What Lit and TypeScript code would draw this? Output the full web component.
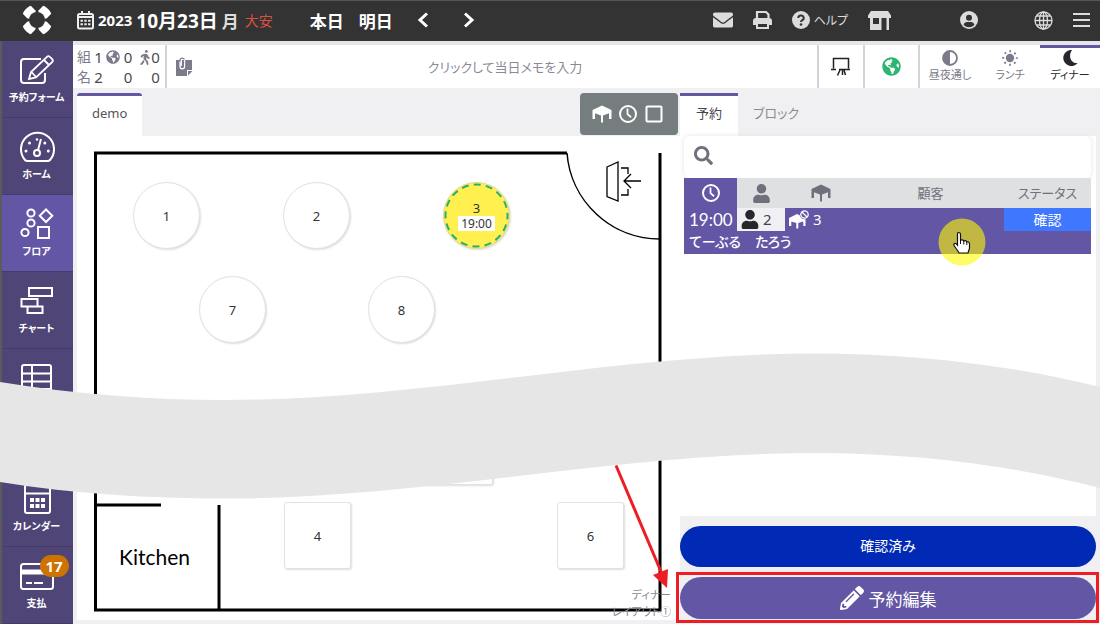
import { LitElement, html, svg, css } from "lit";
import { customElement, state } from "lit/decorators.js";

const P = {
  envelope:
    "M502.3 190.8c3.9-3.1 9.7-.2 9.7 4.7V400c0 26.5-21.5 48-48 48H48c-26.5 0-48-21.5-48-48V195.6c0-5 5.7-7.8 9.7-4.7 22.4 17.4 52.1 39.5 154.1 113.6 21.1 15.4 56.7 47.8 92.2 47.6 35.7.3 72-32.8 92.3-47.6 102-74.1 131.6-96.3 154-113.7zM256 320c23.2.4 56.6-29.2 73.4-41.4 132.7-96.3 142.8-104.7 173.4-128.7 5.8-4.5 9.2-11.5 9.2-18.9v-19c0-26.5-21.5-48-48-48H48c-26.5 0-48 21.5-48 48v19c0 7.4 3.4 14.3 9.2 18.9 30.6 23.9 40.7 32.4 173.4 128.7 16.8 12.2 50.2 41.8 73.4 41.4z",
  user:
    "M224 256c70.7 0 128-57.3 128-128S294.7 0 224 0 96 57.3 96 128s57.3 128 128 128zm89.6 32h-16.7c-22.2 10.2-46.9 16-72.9 16s-50.6-5.8-72.9-16h-16.7C60.2 288 0 348.2 0 422.4V464c0 26.5 21.5 48 48 48h352c26.5 0 48-21.5 48-48v-41.6c0-74.2-60.2-134.4-134.4-134.4z",
  search:
    "M505 442.7L405.3 343c-4.5-4.5-10.6-7-17-7H372c27.6-35.3 44-79.7 44-128C416 93.1 322.9 0 208 0S0 93.1 0 208s93.1 208 208 208c48.3 0 92.7-16.4 128-44v16.3c0 6.4 2.5 12.5 7 17l99.7 99.7c9.4 9.4 24.6 9.4 33.9 0l28.3-28.3c9.4-9.4 9.4-24.6.1-34zM208 336c-70.7 0-128-57.2-128-128 0-70.7 57.2-128 128-128 70.7 0 128 57.2 128 128 0 70.7-57.2 128-128 128z",
  globe:
    "M248 8C111.03 8 0 119.03 0 256s111.03 248 248 248 248-111.03 248-248S384.97 8 248 8zm82.29 357.6c-3.9 3.88-7.99 7.95-11.31 11.28-2.99 3-5.1 6.7-6.17 10.71-1.51 5.66-2.73 11.38-4.77 16.87l-17.39 46.85c-13.76 3-28 4.69-42.65 4.69v-27.38c1.69-12.62-7.64-36.26-22.63-51.25-6-6-9.37-14.14-9.37-22.63v-32.01c0-11.64-6.27-22.34-16.46-27.97-14.37-7.95-34.81-19.06-48.81-26.11-11.48-5.78-22.1-13.14-31.65-21.75l-.8-.72a114.792 114.792 0 0 1-18.06-20.74c-9.38-13.77-24.66-36.42-34.59-51.14 20.47-45.5 57.36-82.04 103.2-101.89l24.01 12.01C203.48 89.74 216 82.01 216 70.11v-11.3c7.99-1.29 16.12-2.11 24.39-2.42l28.3 28.3c6.25 6.25 6.25 16.38 0 22.63L264 112l-10.34 10.34c-3.12 3.12-3.12 8.19 0 11.31l4.69 4.69c3.12 3.12 3.12 8.19 0 11.31l-8 8a8.008 8.008 0 0 1-5.66 2.34h-8.99c-2.08 0-4.08.81-5.58 2.27l-9.92 9.65a8.008 8.008 0 0 0-1.58 9.31l15.59 31.19c2.66 5.32-1.21 11.58-7.15 11.58h-5.64c-1.93 0-3.79-.7-5.24-1.96l-9.28-8.06a16.017 16.017 0 0 0-15.55-3.1l-31.17 10.39a11.95 11.95 0 0 0-8.17 11.34c0 4.53 2.56 8.66 6.61 10.69l11.08 5.54c9.41 4.71 19.79 7.16 30.31 7.16s22.59 27.29 32 32h66.75c8.49 0 16.62 3.37 22.63 9.37l13.69 13.69a30.503 30.503 0 0 1 8.93 21.57 46.536 46.536 0 0 1-13.72 32.98zM417 274.25c-5.79-1.45-10.84-5-14.15-9.97l-17.98-26.97a23.97 23.97 0 0 1 0-26.62l19.59-29.38c2.32-3.47 5.5-6.29 9.24-8.15l12.98-6.49C440.2 193.59 448 223.87 448 256c0 8.67-.74 17.16-1.82 25.54L417 274.25z",
  walk:
    "M208 96c26.5 0 48-21.5 48-48S234.5 0 208 0s-48 21.5-48 48 21.5 48 48 48zm94.5 149.1l-23.3-11.8-9.7-29.4c-14.7-44.6-55.7-75.8-102.2-75.9-36-.1-55.9 10.1-93.3 25.2-21.6 8.7-39.3 25.2-49.7 46.2L17.6 213c-7.8 15.8-1.5 35 14.2 42.9 15.6 7.9 34.6 1.5 42.5-14.3L81 228c3.5-7 9.3-12.5 16.5-15.4l26.8-10.8-15.2 60.7c-5.2 20.8.4 42.9 14.9 58.8l59.9 65.4c7.2 7.9 12.3 17.4 14.9 27.7l18.3 73.3c4.3 17.1 21.7 27.6 38.8 23.3 17.1-4.3 27.6-21.7 23.3-38.8l-22.2-89c-2.6-10.3-7.7-19.9-14.9-27.7l-45.5-49.7 17.2-68.7 5.5 16.5c5.3 16.1 16.7 29.4 31.7 37l23.3 11.8c15.6 7.9 34.6 1.5 42.5-14.3 7.7-15.7 1.4-35.1-14.3-43zM73.6 385.8c-3.2 8.1-8 15.4-14.2 21.5l-50 50.1c-12.5 12.5-12.5 32.8 0 45.3s32.7 12.5 45.2 0l59.4-59.4c6.1-6.1 10.9-13.4 14.2-21.5l13.5-33.8c-55.3-60.3-38.7-41.8-47.4-53.7l-20.7 51.5z",
  pencil:
    "M497.9 142.1l-46.1 46.1c-4.7 4.7-12.3 4.7-17 0l-111-111c-4.7-4.7-4.7-12.3 0-17l46.1-46.1c18.7-18.7 49.1-18.7 67.9 0l60.1 60.1c18.8 18.7 18.8 49.1 0 67.9zM284.2 99.8L21.6 362.4.4 483.9c-2.9 16.4 11.4 30.6 27.8 27.8l121.5-21.3 262.6-262.6c4.7-4.7 4.7-12.3 0-17l-111-111c-4.8-4.7-12.4-4.7-17.1 0zM124.1 339.9c-5.5-5.5-5.5-14.3 0-19.8l154-154c5.5-5.5 14.3-5.5 19.8 0s5.5 14.3 0 19.8l-154 154c-5.5 5.5-14.3 5.5-19.8 0zM88 424h48v36.3l-64.5 11.3-31.1-31.1L51.7 376H88v48z",
};

const solid = (w: number, h: number, vb: string, d: string) =>
  html`<svg width=${w} height=${h} viewBox=${vb} aria-hidden="true"><path fill="currentColor" d=${d} /></svg>`;

const line = (w: number, h: number, body: unknown, sw = 2) =>
  html`<svg width=${w} height=${h} viewBox="0 0 ${w} ${h}" fill="none" stroke="currentColor" stroke-width=${sw} aria-hidden="true">${body}</svg>`;

const clockIcon = () =>
  line(20, 20, svg`<circle cx="10" cy="10" r="8" /><path d="M9.500 4.500v5.700l3.600 3" stroke-width="1.800" />`);

const tableIcon = () =>
  html`<svg width="20" height="18" viewBox="0 0 20 18" fill="currentColor" aria-hidden="true">
    <path d="M10 .5l9.500 4.500V14h-2.500V8.300L11 10.500V17.500H9v-7L3 8.300V14H.5V5z" />
  </svg>`;

const navIcons: Record<string, unknown> = {
  form: line(36, 32, svg`<path d="M22 5H5a3 3 0 0 0-3 3v18a3 3 0 0 0 3 3h18a3 3 0 0 0 3-3V19" />
    <path d="M10 25l2-7L28 2.800a2 2 0 0 1 2.800 0l2.400 2.400a2 2 0 0 1 0 2.800L17 23.500zM25 6l5 5M12.500 18l4.500 5" stroke-width="1.800" />`),
  home: line(36, 32, svg`<path d="M6 29a16.500 16.500 0 1 1 25 0c-.8.900-1.500 1-2.500 1H8.500c-1 0-1.700-.1-2.500-1z" /><circle cx="18" cy="22" r="3" /><path d="M19 19l3-11" /><g fill="currentColor" stroke="none"><circle cx="18" cy="8.500" r="1.300" /><circle cx="10.500" cy="12" r="1.500" /><circle cx="25.800" cy="12" r="1.500" /><circle cx="7" cy="20" r="1.500" /><circle cx="29.300" cy="20" r="1.500" /></g>`),
  floor: line(36, 32, svg`<circle cx="12" cy="5" r="3.600" /><circle cx="12" cy="15" r="3.600" /><circle cx="6" cy="24.500" r="3.600" /><path d="M27 1.500l6.300 6.300L27 14l-6.300-6.200zM19 19h11v11H19z" />`),
  chart: line(36, 32, svg`<path d="M10 3h23v8H10zM2.500 14h16v7.500h-16zM8.500 21.500h15V28h-15z" />`),
  list: line(36, 32, svg`<rect x="3" y="3" width="29" height="28" rx="2" /><path d="M3 11.500h29M3 19.500h29M3 27h29M13 3v28" />`),
  calendar: line(36, 32, svg`<rect x="6" y="2" width="25" height="28" rx="2" /><path d="M6 10.500h25" /><g fill="currentColor" stroke="none"><path d="M11 15h4v4h-4zM16.500 15h4v4h-4zM22 15h4v4h-4zM11 21h4v4h-4zM16.500 21h4v4h-4zM22 21h4v4h-4z" /></g>`),
  pay: line(36, 32, svg`<rect x="2" y="4" width="32" height="25" rx="2.500" /><path d="M2 12h32" stroke-width="5" /><path d="M7 23h6M15 23h9" />`),
};

const NAV = [
  { id: "form", label: "予約フォーム" },
  { id: "home", label: "ホーム" },
  { id: "floor", label: "フロア" },
  { id: "chart", label: "チャート" },
  { id: "list", label: "リスト" },
  { id: "calendar", label: "カレンダー" },
  { id: "pay", label: "支払", badge: 17 },
];

interface Seat {
  label: string;
  x: number;
  y: number;
  square?: boolean;
  time?: string;
}

const SEATS: Seat[] = [
  { label: "1", x: 56, y: 46 },
  { label: "2", x: 206, y: 46 },
  { label: "3", x: 366, y: 46, time: "19:00" },
  { label: "7", x: 122, y: 140 },
  { label: "8", x: 291, y: 140 },
  { label: "", x: 349, y: 282, square: true },
  { label: "4", x: 207, y: 366, square: true },
  { label: "6", x: 480, y: 366, square: true },
];

const base = css`
  * {
    box-sizing: border-box;
  }
  svg {
    display: block;
    flex: none;
  }
  button,
  input {
    font: inherit;
    color: inherit;
    border: 0;
    margin: 0;
    padding: 0;
    background: none;
  }
`;

@customElement("top-bar")
class TopBar extends LitElement {
  static styles = [
    base,
    css`
      :host {
        display: flex;
        align-items: center;
        height: 41px;
        padding: 0 10px 2px 22px;
        background: #333;
        border-top: 1px solid #555;
        color: #dcdcdc;
      }
      .date {
        display: flex;
        align-items: center;
        gap: 4px;
        margin-left: 25px;
        color: #fff;
        font-weight: 700;
        white-space: nowrap;
      }
      .year {
        font-size: 15px;
      }
      .day {
        font-size: 19px;
      }
      .weekday {
        font-size: 17px;
        color: #ddd;
      }
      .luck {
        margin-left: 2px;
        font-size: 14px;
        font-weight: 400;
        color: #d9503f;
      }
      .jump {
        display: flex;
        align-items: center;
        gap: 15px;
        margin-left: 37px;
        color: #fff;
        font-size: 17px;
        font-weight: 700;
        white-space: nowrap;
      }
      .arrows {
        display: flex;
        gap: 34px;
        margin-left: 24px;
        color: #fff;
      }
      .tools {
        display: flex;
        align-items: center;
        gap: 20px;
        margin-left: auto;
      }
      .help {
        display: flex;
        align-items: center;
        gap: 4px;
        font-size: 12px;
        white-space: nowrap;
      }
      .account {
        margin: 0 36px 0 49px;
      }
    `,
  ];

  render() {
    return html`
      <svg width="30" height="30" viewBox="0 0 30 30" aria-hidden="true">
        <g fill="#fff">
          ${[0, 90, 180, 270].map((a) => svg`<path d="M16.800 5.200l4.400-4.400c3.500 1.200 6.800 4.500 8 8l-4.400 4.400-3.800 1L15.800 9z" transform="rotate(${a} 15 15)" />`)}
        </g>
        <circle cx="15" cy="15" r="8" fill="#333" />
      </svg>
      <button class="date" aria-label="日付を選択">
        <svg width="17" height="19" viewBox="0 0 17 19" fill="none" stroke="#eee" stroke-width="2" aria-hidden="true">
          <rect x="1" y="3" width="15" height="14.500" rx="1.500" /><path d="M5 0v4M12 0v4M1 6h15" />
          <path d="M3.500 9.800h10M3.500 13.300h10" stroke-dasharray="2.400 1.400" />
        </svg>
        <span class="year">2023</span><span class="day">10月23日</span><span class="weekday">月</span><span class="luck">大安</span>
      </button>
      <div class="jump"><button>本日</button><button>明日</button></div>
      <div class="arrows">
        <button aria-label="前日">${line(12, 16, svg`<path d="M10 1.500L3 8l7 6.500" stroke-width="3" />`)}</button>
        <button aria-label="翌日">${line(12, 16, svg`<path d="M2 1.500L9 8l-7 6.500" stroke-width="3" />`)}</button>
      </div>
      <div class="tools">
        <button aria-label="メール">${solid(20, 20, "0 0 512 512", P.envelope)}</button>
        <button aria-label="印刷">
          ${line(19, 20, svg`<path d="M4 9V2h9l2.500 2.500V9" stroke-width="2.200" /><path d="M0 15v-4a3 3 0 0 1 3-3h13a3 3 0 0 1 3 3v4h-3v-3H3v3z" fill="currentColor" stroke="none" /><path d="M4 13h11v5H4z" />`)}
        </button>
        <button class="help">
          <svg width="18" height="18" viewBox="0 0 18 18" aria-hidden="true">
            <circle cx="9" cy="9" r="9" fill="#dcdcdc" />
            <path d="M6.300 7a2.700 2.500 0 1 1 4 2.100c-.9.500-1.300.9-1.300 1.900" fill="none" stroke="#333" stroke-width="2" /><circle cx="9" cy="13.500" r="1.300" fill="#333" />
          </svg>
          <span>ヘルプ</span>
        </button>
        <button aria-label="店舗">
          <svg width="23" height="19" viewBox="0 0 23 19" fill="currentColor" aria-hidden="true">
            <path d="M3 0h17l3 4.500V7H0V4.500zM2 7h3v6h6V7h2.500v12H2zM18.500 7H21v12h-2.500z" />
          </svg>
        </button>
        <button class="account" aria-label="アカウント">
          <svg width="18" height="18" viewBox="0 0 18 18" aria-hidden="true">
            <circle cx="9" cy="9" r="9" fill="#dcdcdc" /><circle cx="9" cy="6.800" r="3" fill="#333" />
            <path d="M3.600 14c.5-2.300 2-3 3.400-3h4c1.400 0 2.900.7 3.400 3A7.400 7.400 0 0 1 3.600 14z" fill="#333" />
          </svg>
        </button>
        <button aria-label="言語">
          ${line(19, 19, svg`<circle cx="9.500" cy="9.500" r="8.500" /><ellipse cx="9.500" cy="9.500" rx="4" ry="8.500" /><path d="M9.500 1v17M1 9.500h17M2.500 5h14M2.500 14h14" />`, 1.3)}
        </button>
        <button aria-label="メニュー">${line(17, 16, svg`<path d="M0 2h17M0 8h17M0 14h17" />`, 2.2)}</button>
      </div>
    `;
  }
}

@customElement("side-nav")
class SideNav extends LitElement {
  @state() private current = "floor";

  static styles = [
    base,
    css`
      :host {
        display: flex;
        flex-direction: column;
        background: #4f4677;
        border-left: 2px solid #5a5a5f;
      }
      .item {
        display: flex;
        flex-direction: column;
        align-items: center;
        gap: 2px;
        height: 77px;
        padding: 13px 2px 0 0;
        border-bottom: 1px solid #433b6b;
        color: #fff;
        font-size: 10px;
        line-height: 18px;
        font-weight: 700;
        white-space: nowrap;
      }
      .item.on {
        background: #6356a5;
      }
      .low {
        margin-top: auto;
      }
      .icon {
        position: relative;
      }
      .badge {
        position: absolute;
        left: 21px;
        top: -5px;
        width: 29px;
        border-radius: 11px;
        background: #cf7300;
        font-size: 15px;
        line-height: 22px;
        text-align: center;
      }
    `,
  ];

  render() {
    return NAV.map(
      (n) => html`<button
        class="item ${n.id === this.current ? "on" : ""} ${n.id === "calendar" ? "low" : ""}"
        @click=${() => (this.current = n.id)}
      >
        <span class="icon">${navIcons[n.id]}${n.badge ? html`<span class="badge">${n.badge}</span>` : ""}</span>
        <span>${n.label}</span>
      </button>`,
    );
  }
}

@customElement("day-summary")
class DaySummary extends LitElement {
  static styles = [
    base,
    css`
      :host {
        display: flex;
        height: 47px;
        padding-left: 4px;
        border-top: 4px solid #e6e6e9;
        background: #fff;
        color: #7b7b8b;
      }
      .counts {
        display: grid;
        grid-template-columns: 15px 13px 15px 16px 14px 11px;
        grid-template-rows: 20px 20px;
        align-items: center;
        width: 90px;
        padding-top: 2px;
        border-right: 2px solid #d3d3da;
        font-size: 15px;
        line-height: 20px;
      }
      .counts span {
        font-size: 14px;
      }
      .counts b {
        font-weight: 400;
        color: #4a4a4f;
        text-align: center;
      }
      .counts svg {
        margin-left: auto;
      }
      .memo {
        display: flex;
        flex: 1;
        align-items: center;
        min-width: 0;
        padding: 0 0 0 9px;
      }
      .memo input {
        flex: 1;
        min-width: 0;
        height: 40px;
        font-size: 13px;
        text-align: center;
        outline: 0;
      }
      .memo input::placeholder {
        color: #8a8a96;
        opacity: 1;
      }
      .tool {
        display: grid;
        place-items: center;
        width: 46px;
        border-left: 2px solid #d3d3da;
        color: #222;
      }
      .web {
        width: 55px;
        color: #2fb573;
      }
      .shifts {
        display: grid;
        grid-template-columns: repeat(3, 60px);
        border-left: 2px solid #d3d3da;
      }
      .shift {
        display: flex;
        flex-direction: column;
        align-items: center;
        gap: 1px;
        padding-top: 2px;
        border-top: 3px solid transparent;
        font-size: 11px;
        line-height: 16px;
        white-space: nowrap;
      }
      .shift.on {
        border-color: #6356a5;
        color: #26262b;
      }
    `,
  ];

  render() {
    return html`
      <div class="counts">
        <span>組</span><b>1</b>${solid(14, 14, "0 0 496 512", P.globe)}<b>0</b>${solid(10, 15, "0 0 320 512", P.walk)}<b>0</b>
        <span>名</span><b>2</b><span></span><b>0</b><span></span><b>0</b>
      </div>
      <label class="memo">
        <svg width="17" height="20" viewBox="0 0 17 20" aria-hidden="true">
          <path d="M0 3h16v10h-5v6H0z" fill="#7b7b8b" /><path d="M12 14h4.500L12 18.500z" fill="#7b7b8b" />
          <path d="M4 4.500v5a2.300 2.300 0 0 0 4.600 0v-6a1.700 1.700 0 0 0-3.300 0v5.500" fill="none" stroke="#fff" stroke-width="1.200" />
          <path d="M4 3V2.500A2.500 2.500 0 0 1 8.500 2.500" fill="none" stroke="#7b7b8b" stroke-width="1.200" />
        </svg>
        <input type="text" aria-label="当日メモ" placeholder="クリックして当日メモを入力" />
      </label>
      <button class="tool" aria-label="案内板">
        ${line(20, 20, svg`<path d="M2.500 11.500V1.500h15v10M0 12.500h5M8 12.500h11M9 13l-2.500 5.500M11.500 13v5M13 13l1.500 5" />`, 1.5)}
      </button>
      <button class="tool web" aria-label="ネット予約">${solid(19, 19, "0 0 496 512", P.globe)}</button>
      <div class="shifts">
        <button class="shift">
          ${line(16, 16, svg`<circle cx="8" cy="8" r="7" stroke-width="1.800" /><path d="M8 1a7 7 0 0 0 0 14z" fill="currentColor" stroke="none" />`)}<span>昼夜通し</span>
        </button>
        <button class="shift">
          ${line(16, 16, svg`<circle cx="8" cy="8" r="4.200" fill="currentColor" stroke="none" /><circle cx="8" cy="8" r="6.800" stroke-dasharray="1.800 3.540" stroke-dashoffset=".9" />`)}<span>ランチ</span>
        </button>
        <button class="shift on">
          ${solid(16, 16, "0 0 16 16", "M10 0A8 8 0 1 0 15.500 13C9.500 14 5.500 7 10 0z")}<span>ディナー</span>
        </button>
      </div>
    `;
  }
}

@customElement("floor-plan")
class FloorPlan extends LitElement {
  static styles = [
    base,
    css`
      :host {
        display: flex;
        flex-direction: column;
        min-width: 0;
      }
      .head {
        display: flex;
        justify-content: space-between;
        height: 48px;
        padding: 5px 2px 0 0;
      }
      .tab {
        padding: 0 15px 6px;
        border-top: 3px solid #6356a5;
        border-radius: 3px 3px 0 0;
        background: #fff;
        color: #55555c;
        font-size: 13px;
      }
      .modes {
        display: flex;
        align-items: center;
        gap: 6px;
        height: 42px;
        padding: 0 14px 0 12px;
        border-radius: 4px;
        background: #757d7e;
        color: #fff;
      }
      .canvas {
        position: relative;
        flex: 1;
        min-height: 484px;
        margin-bottom: 4px;
        background: #fff;
        overflow: hidden;
      }
      .walls {
        position: absolute;
        left: 0;
        top: 0;
      }
      .seat {
        position: absolute;
        display: flex;
        flex-direction: column;
        align-items: center;
        justify-content: center;
        width: 67px;
        height: 67px;
        border: 1px solid #e2e2e2;
        border-radius: 3px;
        background: #fff;
        box-shadow: 1px 1px 2px #ddd;
        color: #333;
        font-size: 13px;
        line-height: 16px;
      }
      .round {
        border-radius: 50%;
      }
      .busy {
        border-color: #e3d98a;
        background: #fff04f;
      }
      .ring {
        position: absolute;
        left: 0;
        top: 0;
      }
      .time {
        padding: 0 3px;
        background: #fff;
        font-size: 12px;
        line-height: 15px;
      }
      .kitchen {
        position: absolute;
        left: 42px;
        top: 407px;
        color: #000;
        font: 21px/28px Lato, sans-serif;
      }
      .caption {
        position: absolute;
        right: 9px;
        bottom: 0;
        color: #8a8a94;
        font-size: 11px;
        line-height: 17px;
        text-align: right;
      }
    `,
  ];

  render() {
    return html`
      <div class="head">
        <button class="tab">demo</button>
        <div class="modes">
          <button aria-label="テーブル">${tableIcon()}</button>
          <button aria-label="時間">${clockIcon()}</button>
          <button aria-label="選択">${line(20, 20, svg`<rect x="2.500" y="2.500" width="15" height="15" rx="1" />`)}</button>
        </div>
      </div>
      <div class="canvas">
        <svg class="walls" width="603" height="484" viewBox="0 0 603 484" fill="none" stroke="#000" stroke-width="3" aria-hidden="true">
          <path d="M490 17H18.500V474H583V17M18 369H84M142 369V474" />
          <path d="M490 17A93 93 0 0 0 583 103" stroke-width="1.500" />
          <path d="M530 31l11-5v39l-11-4.500zM544 32h7v6M544 59h7v-6M564 45h-17M554 38l-7 7 7 7" stroke-width="1.300" />
        </svg>
        ${SEATS.map(
          (s) => html`<button
            class="seat ${s.square ? "" : "round"} ${s.time ? "busy" : ""}"
            style="left:${s.x}px;top:${s.y}px"
            aria-label=${"テーブル" + s.label}
          >
            ${s.time
              ? html`<svg class="ring" width="65" height="65" viewBox="0 0 65 65" aria-hidden="true">
                  <circle cx="32.500" cy="32.500" r="31" fill="none" stroke="#27ae72" stroke-width="2" stroke-dasharray="7 5.170" stroke-dashoffset="3" />
                </svg>`
              : ""}
            <span>${s.label}</span>${s.time ? html`<span class="time">${s.time}</span>` : ""}
          </button>`,
        )}
        <span class="kitchen">Kitchen</span>
        <div class="caption">ディナー<br />レイアウト①</div>
      </div>
    `;
  }
}

@customElement("booking-panel")
class BookingPanel extends LitElement {
  static styles = [
    base,
    css`
      :host {
        position: relative;
        display: flex;
        flex-direction: column;
        padding-right: 4px;
      }
      .tabs {
        display: flex;
        height: 48px;
        padding-top: 5px;
        font-size: 13px;
      }
      .tab {
        padding: 0 15px 8px;
        border-top: 3px solid transparent;
        color: #8a8a94;
      }
      .tab.on {
        padding: 0 16px 8px;
        border-color: #6356a5;
        background: #fff;
        color: #44444a;
      }
      .body {
        position: relative;
        flex: 1;
        padding: 0 5px 0 4px;
        background: #fff;
      }
      .search {
        display: flex;
        align-items: center;
        gap: 10px;
        height: 42px;
        padding: 0 10px 4px;
        border-radius: 6px;
        box-shadow: 0 0 5px #e4e4e8;
        color: #70707c;
      }
      .search input {
        flex: 1;
        min-width: 0;
        outline: 0;
      }
      table {
        width: 100%;
        table-layout: fixed;
        border-collapse: collapse;
      }
      .c1 {
        width: 53px;
      }
      .c2 {
        width: 48px;
      }
      .c3 {
        width: 72px;
      }
      .c5 {
        width: 87px;
      }
      th,
      td {
        padding: 0;
        white-space: nowrap;
      }
      th {
        height: 30px;
        background: #dfe0e2;
        color: #70707c;
        font-size: 13px;
        font-weight: 400;
        line-height: 20px;
      }
      th svg {
        margin: 0 auto;
      }
      th.sorted {
        background: #6356a5;
        color: #fff;
      }
      td {
        height: 23px;
        background: #6356a5;
        color: #fff;
        font-size: 15px;
        line-height: 23px;
      }
      .clock {
        padding-left: 5px;
        font-family: Lato, sans-serif;
        font-size: 17px;
      }
      .pair {
        display: flex;
        align-items: center;
        gap: 4px;
        padding-left: 4px;
      }
      td.guests {
        background: #efeff4;
        color: #44444a;
      }
      .guests svg {
        color: #26262b;
      }
      td.status {
        background: #4077ff;
        font-size: 14px;
        text-align: center;
      }
      td.name {
        padding: 0 0 2px 5px;
        font-size: 14px;
        line-height: 21px;
        font-weight: 500;
      }
      .pointer {
        position: absolute;
        right: 110px;
        top: 82px;
      }
      .actions {
        display: flex;
        flex-direction: column;
        gap: 5px;
        padding: 10px 0 1px;
      }
      .pill {
        display: flex;
        align-items: center;
        justify-content: center;
        gap: 5px;
        width: 100%;
        height: 41px;
        padding-bottom: 4px;
        border-radius: 22px;
        background: #0029b6;
        color: #fff;
        font-size: 14px;
      }
      .marked {
        margin: 0 -3px 0 -4px;
        padding: 2px 0 1px 1px;
        border: 3px solid #ee1c25;
      }
      .edit {
        height: 42px;
        padding-bottom: 0;
        background: #6356a5;
        font-size: 17px;
      }
    `,
  ];

  render() {
    return html`
      <div class="tabs"><button class="tab on">予約</button><button class="tab">ブロック</button></div>
      <div class="body">
        <label class="search">${solid(19, 19, "0 0 512 512", P.search)}<input type="text" aria-label="予約を検索" /></label>
        <table>
          <colgroup><col class="c1" /><col class="c2" /><col class="c3" /><col /><col class="c5" /></colgroup>
          <thead>
            <tr>
              <th class="sorted" aria-label="時間">${clockIcon()}</th>
              <th aria-label="人数">${solid(17, 19, "0 0 448 512", P.user)}</th>
              <th aria-label="テーブル">${tableIcon()}</th>
              <th>顧客</th>
              <th>ステータス</th>
            </tr>
          </thead>
          <tbody>
            <tr>
              <td class="clock">19:00</td>
              <td class="guests"><div class="pair">${solid(18, 19, "0 0 448 512", P.user)}<span>2</span></div></td>
              <td>
                <div class="pair">
                  <svg width="20" height="19" viewBox="0 0 20 19" aria-hidden="true">
                    <path fill="currentColor" d="M8 4l8.500 4V16h-2.200v-4.500L9.300 13v5.500h-2V13l-5-1.500V16H0V8z" />
                    <circle cx="15.500" cy="4.500" r="4.800" fill="#6356a5" /><circle cx="15.500" cy="4.500" r="3.700" fill="none" stroke="currentColor" stroke-width="1.300" /><path d="M13 2l5 5" stroke="currentColor" stroke-width="1.300" />
                  </svg>
                  <span>3</span>
                </div>
              </td>
              <td></td>
              <td class="status">確認</td>
            </tr>
            <tr>
              <td class="name" colspan="5">てーぶる　たろう</td>
            </tr>
          </tbody>
        </table>
        <svg class="pointer" width="48" height="48" viewBox="0 0 48 48" aria-hidden="true">
          <circle cx="24" cy="24" r="23.500" fill="#fffa00" fill-opacity=".6" />
          <path d="M20.500 14.500c1.200 0 2 .8 2 2v6c.5-1 3-1 3.300.5 1-.8 2.800-.4 3 1 1.200-.6 2.700 0 2.700 1.700V30c0 1.500-1 2.500-1.500 5H21c-1-2.500-3.500-5-5-7.500-.8-1.400.6-2.700 2-1.800l1.500 1.500V16.500c0-1.200.2-2 1-2z" fill="#fff" stroke="#111" stroke-width="1.200" />
          <path d="M22.500 22v4M25.800 23v3.500M28.800 24v3" stroke="#111" stroke-width="1" />
        </svg>
      </div>
      <div class="actions">
        <button class="pill">確認済み</button>
        <div class="marked">
          <button class="pill edit">${solid(24, 24, "0 0 512 512", P.pencil)}<span>予約編集</span></button>
        </div>
      </div>
    `;
  }
}

@customElement("app-root")
class AppRoot extends LitElement {
  static styles = [
    base,
    css`
      :host {
        position: relative;
        display: grid;
        grid-template-rows: auto 1fr;
        min-height: 100vh;
        background: #f0f0f3;
        font-family: "Noto Sans", "Noto Sans CJK JP", sans-serif;
        font-feature-settings: "palt";
        overflow: hidden;
      }
      .page {
        display: grid;
        grid-template-columns: 73px 1fr;
      }
      .main {
        display: flex;
        flex-direction: column;
        min-width: 0;
      }
      .work {
        display: grid;
        flex: 1;
        grid-template-columns: 1fr 420px;
        padding-left: 4px;
      }
      .wave {
        position: absolute;
        left: 0;
        top: 353px;
        width: 100%;
        height: 146px;
      }
      .arrow {
        position: absolute;
        right: 430px;
        bottom: 35px;
      }
    `,
  ];

  render() {
    return html`
      <top-bar></top-bar>
      <div class="page">
        <side-nav></side-nav>
        <div class="main">
          <day-summary></day-summary>
          <div class="work"><floor-plan></floor-plan><booking-panel></booking-panel></div>
        </div>
      </div>
      <svg class="wave" viewBox="0 353 1100 146" preserveAspectRatio="none" aria-hidden="true">
        <path fill="#e6e6e6" d="M0 382C75 394 150 400 225 400C420 400 620 353.500 815 353.500C920 353.500 1020 367 1100 387V488C1020 467 920 453 815 453C620 453 420 498.500 225 498.500C150 498.500 75 494 0 482z" />
      </svg>
      <svg class="arrow" width="58" height="125" viewBox="0 0 58 125" aria-hidden="true">
        <path d="M4 1.500L50 110" stroke="#ee1c25" stroke-width="3" /><path d="M41 111l15-6-1 19z" fill="#ee1c25" />
      </svg>
    `;
  }
}
